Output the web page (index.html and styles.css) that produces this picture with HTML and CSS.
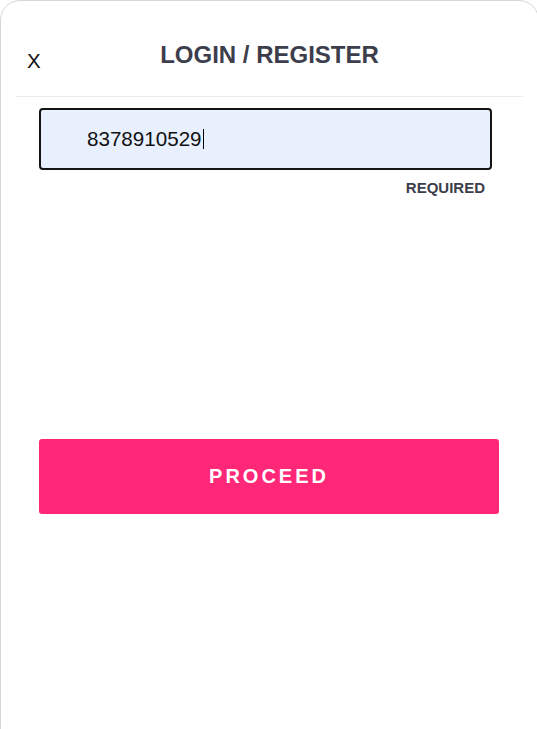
FILE: index.html
```html
<!DOCTYPE html>
<html lang="en">
<head>
<meta charset="utf-8">
<title>Login / Register</title>
<link rel="stylesheet" href="styles.css">
</head>
<body>
<div class="panel">
  <header class="header">
    <span class="close">X</span>
    <h1 class="title">LOGIN / REGISTER</h1>
    <span class="spacer"></span>
  </header>
  <main class="content">
    <div class="field"><span class="value">8378910529</span><span class="caret"></span></div>
    <div class="hint">REQUIRED</div>
    <button class="proceed" type="button">PROCEED</button>
  </main>
</div>
</body>
</html>
```
FILE: styles.css
```css
html, body {
  margin: 0;
  padding: 0;
  background: #ffffff;
  overflow: hidden;
}
body {
  font-family: "Liberation Sans", Arial, sans-serif;
}
.panel {
  box-sizing: border-box;
  width: 539px;
  height: 760px;
  border: 1px solid #d6d6d6;
  border-radius: 20px 20px 0 0;
  background: #fff;
}
.header {
  display: grid;
  grid-template-columns: 1fr auto 1fr;
  margin: 0 15px;
  padding: 40px 0 0;
  height: 55px;
  border-bottom: 1px solid #ebebeb;
}
.close {
  justify-self: start;
  align-self: start;
  margin: 8px 0 0 11px;
  font-size: 20.5px;
  line-height: 23px;
  color: #111;
}
.title {
  margin: 0;
  font-size: 24px;
  line-height: 28px;
  font-weight: bold;
  color: #3c3e4c;
}
.content {
  display: flex;
  flex-direction: column;
  align-items: flex-start;
  padding: 11px 0 0 38px;
}
.field {
  box-sizing: border-box;
  width: 453px;
  height: 62px;
  display: flex;
  align-items: center;
  padding-left: 46px;
  border: 2px solid #141414;
  border-radius: 4px;
  background: #e8f0fe;
  font-size: 20.6px;
  color: #111;
}
.caret {
  display: inline-block;
  width: 1px;
  height: 20px;
  margin-left: 1px;
  background: #000;
}
.hint {
  align-self: flex-start;
  width: 446px;
  margin-top: 9px;
  text-align: right;
  font-size: 15px;
  line-height: 17px;
  font-weight: bold;
  color: #3c3e4c;
}
.proceed {
  margin-top: 243px;
  width: 460px;
  height: 75px;
  border: none;
  border-radius: 3px;
  background: #ff2777;
  color: #fff;
  font-family: "Liberation Sans", Arial, sans-serif;
  font-size: 20px;
  font-weight: bold;
  letter-spacing: 3px;
  padding: 0;
  cursor: pointer;
}
```
